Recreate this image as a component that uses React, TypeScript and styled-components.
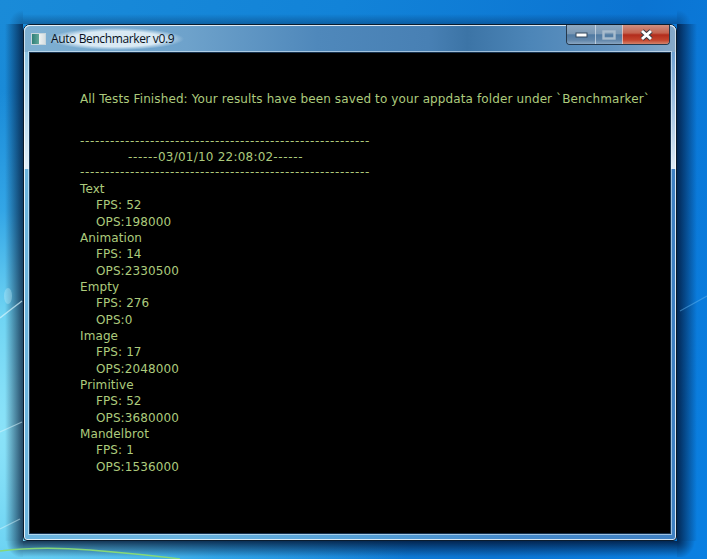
import * as React from 'react'
import styled, { createGlobalStyle } from 'styled-components'

const Global = createGlobalStyle`
    html, body {
        margin: 0;
        padding: 0;
        width: 707px;
        height: 559px;
        overflow: hidden;
    }
`

const Desktop = styled.div`
    position: relative;
    box-sizing: border-box;
    width: 707px;
    height: 559px;
    padding: 24px 30px 18px 23px;
    overflow: hidden;
    background:
        linear-gradient(90deg, rgba(0, 15, 45, 0), rgba(0, 15, 45, 0.72)) 5px 24px / 18px 517px no-repeat,
        linear-gradient(270deg, rgba(0, 15, 45, 0), rgba(0, 15, 45, 0.78)) 677px 24px / 20px 517px no-repeat,
        linear-gradient(0deg, rgba(0, 15, 45, 0), rgba(0, 15, 45, 0.78)) 23px 541px / 654px 16px no-repeat,
        linear-gradient(180deg, rgba(0, 15, 45, 0), rgba(0, 15, 45, 0.3)) 23px 14px / 654px 10px no-repeat,
        radial-gradient(circle at 100% 0, rgba(0, 15, 45, 0.72), rgba(0, 15, 45, 0) 17px) 5px 541px / 18px 16px no-repeat,
        radial-gradient(circle at 0 0, rgba(0, 15, 45, 0.78), rgba(0, 15, 45, 0) 18px) 677px 541px / 20px 16px no-repeat,
        radial-gradient(circle at 100% 100%, rgba(0, 15, 45, 0.3), rgba(0, 15, 45, 0) 14px) 9px 10px / 14px 14px no-repeat,
        radial-gradient(circle at 0 100%, rgba(0, 15, 45, 0.3), rgba(0, 15, 45, 0) 14px) 677px 10px / 14px 14px no-repeat,
        radial-gradient(ellipse 480px 340px at -40px 430px, #92e6fa 0%, #6fd4f3 35%, rgba(60, 175, 235, 0.75) 65%, rgba(30, 140, 225, 0) 100%),
        linear-gradient(105deg, #1a8bd8 0%, #1283d8 40%, #0b74d2 75%, #0a80e2 100%);
`

const Wallpaper = styled.svg`
    position: absolute;
    left: 0;
    top: 0;
`

const Window = styled.div`
    position: relative;
    box-sizing: border-box;
    width: 654px;
    height: 517px;
    display: flex;
    flex-direction: column;
    padding: 0 5px 6px 5px;
    border: 1px solid #0a1c2e;
    border-radius: 7px 7px 4px 4px;
    background:
        linear-gradient(180deg, rgba(170, 205, 230, 0.1) 0%, rgba(225, 238, 246, 0.25) 15%, rgba(235, 243, 250, 0.92) 100%) 0 0 / 100% 144px no-repeat,
        linear-gradient(90deg, #6bb4de 0%, #68b2de 25%, #55a0d6 50%, #4489ca 75%, #3f80c2 100%);
    box-shadow: inset 0 0 0 1px rgba(255, 255, 255, 0.8);
`

const TitleBar = styled.div`
    flex: none;
    height: 27px;
    margin: 0 -5px;
    padding-left: 7px;
    display: flex;
    align-items: center;
    gap: 6px;
    border-radius: 6px 6px 0 0;
    background: linear-gradient(90deg, #7fb0d2 0%, #6ea2cb 25%, #4f88bb 45%, #4880b4 62%, #3c74a6 68%, #4d86b8 78%, #6394c2 90%, #86a8c8 100%);
    box-shadow: inset 0 1px 0 rgba(255, 255, 255, 0.8), inset 1px 0 0 rgba(255, 255, 255, 0.6), inset -1px 0 0 rgba(255, 255, 255, 0.6);
`

const AppIcon = styled.div`
    flex: none;
    width: 13px;
    height: 10px;
    border: 1px solid #c8d6dc;
    background: linear-gradient(90deg, #2f7f78 0%, #5ea598 50%, #eef2f2 55%, #d6dfe2 100%);
`

const Title = styled.div`
    font-family: "Open Sans", "Noto Sans", sans-serif;
    font-size: 12px;
    letter-spacing: -0.38px;
    line-height: 22px;
    color: #07101c;
    margin-left: -3px;
    padding: 0 10px 0 2px;
    background: radial-gradient(ellipse closest-side, rgba(226, 239, 247, 0.92) 70%, rgba(226, 239, 247, 0) 100%);
`

const Controls = styled.div`
    position: absolute;
    top: 0;
    right: 6px;
    height: 19px;
    display: flex;
    border: 1px solid #26394d;
    border-top: none;
    border-radius: 0 0 4px 4px;
    overflow: hidden;
`

const ControlButton = styled.div<{ $width: number; $close?: boolean }>`
    box-sizing: border-box;
    width: ${p => p.$width}px;
    display: flex;
    align-items: center;
    justify-content: center;
    border-left: 1px solid rgba(235, 242, 248, 0.6);
    background: ${p => p.$close
        ? 'linear-gradient(180deg, #cf8f80 0%, #c4624f 42%, #b22c1c 52%, #c4452e 80%, #d4836c 100%)'
        : 'linear-gradient(180deg, #8ea8c0 0%, #7b98b4 45%, #507aa2 52%, #6286aa 80%, #8aa6c2 100%)'};
    &:first-child {
        border-left: none;
    }
`

const Client = styled.div`
    flex: 1;
    min-height: 0;
    box-sizing: border-box;
    background: #000;
    border: 1px solid #16304c;
    outline: 1px solid rgba(235, 245, 252, 0.55);
    padding: 38px 0 0 50px;
    font-family: "DejaVu Sans", sans-serif;
    font-size: 12px;
    line-height: 16.35px;
    color: #adcb7d;
    white-space: pre;
`

const Notice = styled.div`
    margin-bottom: 27px;
    letter-spacing: 0.115px;
`

const Rule = styled.div`
    letter-spacing: 0.67px;
    line-height: 15.5px;
`

const Stamp = styled.div`
    padding-left: 48px;
    line-height: 15.5px;
    letter-spacing: 0.67px;
`

const StampDate = styled.span`
    letter-spacing: 0.22px;
`

const TestName = styled.div`
    letter-spacing: 0.1px;
`

const Stat = styled.div`
    padding-left: 16px;
    letter-spacing: 0.1px;
`

const results = [
    { name: 'Text', fps: '52', ops: '198000' },
    { name: 'Animation', fps: '14', ops: '2330500' },
    { name: 'Empty', fps: '276', ops: '0' },
    { name: 'Image', fps: '17', ops: '2048000' },
    { name: 'Primitive', fps: '52', ops: '3680000' },
    { name: 'Mandelbrot', fps: '1', ops: '1536000' },
]

const dashes = '-'.repeat(58)

export default function App() {
    return <Desktop>
        <Global />
        <Wallpaper width={707} height={559} viewBox="0 0 707 559" fill="none">
            <path d="M0 551 Q40 546 90 550 T180 559" stroke="#86d878" strokeWidth={1.5} />
            <path d="M0 318 Q10 310 22 301" stroke="#d6f4fc" strokeWidth={1.5} opacity={0.7} />
            <ellipse cx={8} cy={296} rx={4} ry={8} fill="#c4eefa" opacity={0.35} />
            <path d="M0 432 L22 422" stroke="#d6f4fc" strokeWidth={1.2} opacity={0.55} />
            <path d="M0 529 L20 519" stroke="#d6f4fc" strokeWidth={1.2} opacity={0.5} />
            <path d="M680 311 L707 296" stroke="#5fb4f0" strokeWidth={1.2} opacity={0.5} />
        </Wallpaper>
        <Window>
            <TitleBar>
                <AppIcon />
                <Title>Auto Benchmarker v0.9</Title>
            </TitleBar>
            <Controls>
                <ControlButton $width={28}>
                    <svg width={13} height={6} viewBox="0 0 13 6"><rect x={1} y={1} width={11} height={4} fill="#fff" stroke="#34495e" strokeWidth={1} /></svg>
                </ControlButton>
                <ControlButton $width={27}>
                    <svg width={14} height={10} viewBox="0 0 14 10"><rect x={1.5} y={1.5} width={11} height={7} fill="none" stroke="#a9bccd" strokeWidth={2.4} /></svg>
                </ControlButton>
                <ControlButton $width={47} $close>
                    <svg width={15} height={12} viewBox="0 0 15 12"><path d="M3 2 L12 10 M12 2 L3 10" stroke="#3c3c44" strokeWidth={5} /><path d="M3 2 L12 10 M12 2 L3 10" stroke="#fff" strokeWidth={3} /></svg>
                </ControlButton>
            </Controls>
            <Client>
                <Notice>All Tests Finished: Your results have been saved to your appdata folder under `Benchmarker`</Notice>
                <Rule>{dashes}</Rule>
                <Stamp>------<StampDate>03/01/10 22:08:02</StampDate>------</Stamp>
                <Rule>{dashes}</Rule>
                {results.map(r => <React.Fragment key={r.name}>
                    <TestName>{r.name}</TestName>
                    <Stat>FPS: {r.fps}</Stat>
                    <Stat>OPS:{r.ops}</Stat>
                </React.Fragment>)}
            </Client>
        </Window>
    </Desktop>
}
